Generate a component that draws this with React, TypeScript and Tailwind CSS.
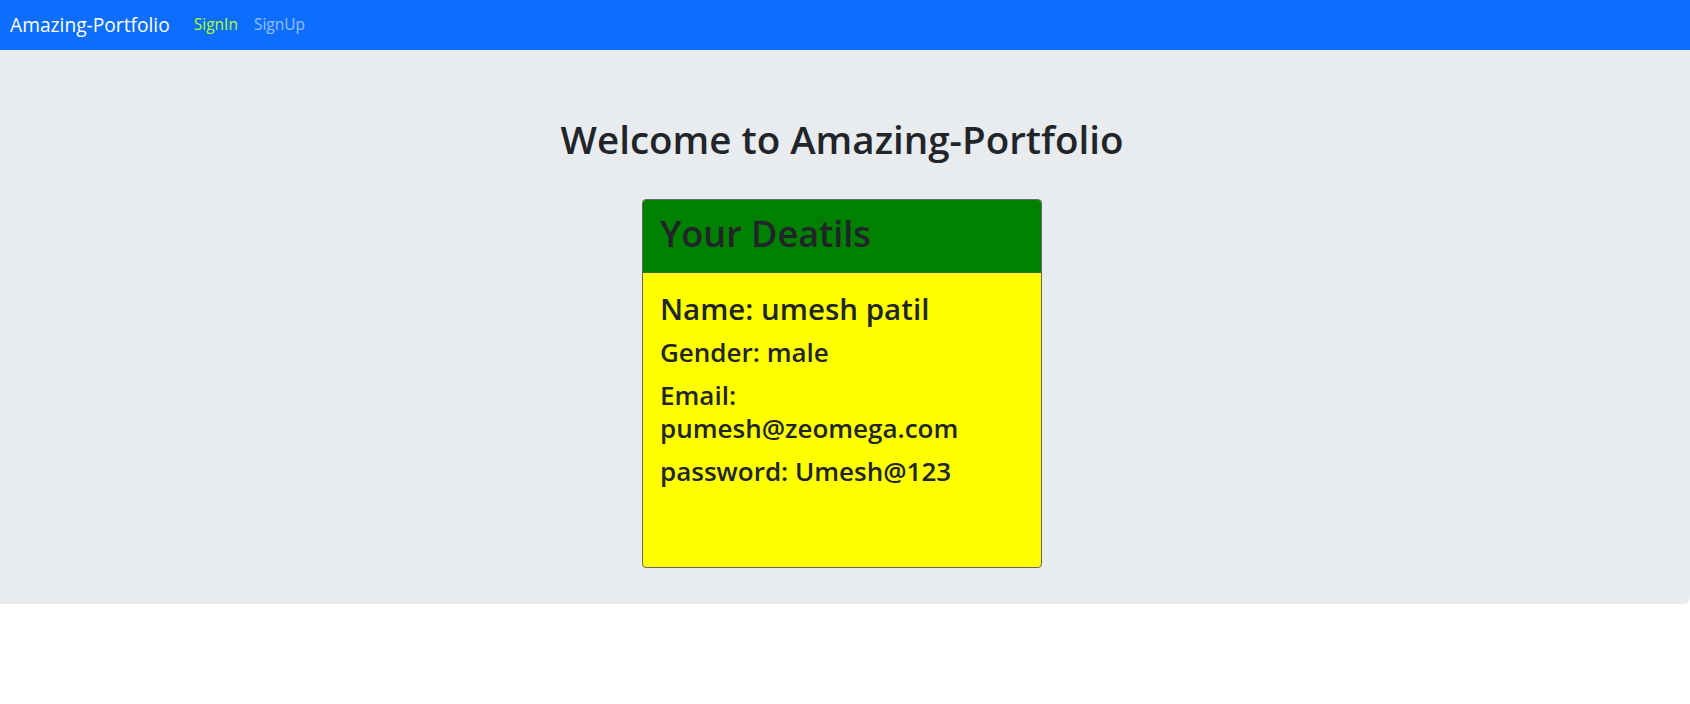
import React from "react";

const user = {
  name: "umesh patil",
  gender: "male",
  email: "pumesh@zeomega.com",
  password: "Umesh@123",
};

const App: React.FC = () => {
  return (
    <div className="min-h-[704px] bg-white text-[#212529] font-['Open_Sans',sans-serif]">
      <nav className="h-[50px] bg-[#0d6efd] flex items-center px-[10px]">
        <span className="text-white text-[19.2px] mr-[24px]">Amazing-Portfolio</span>
        <a className="text-[#adff2f] text-[15.5px] mr-[16px]" href="#">
          SignIn
        </a>
        <a className="text-white/55 text-[15.5px]" href="#">
          SignUp
        </a>
      </nav>

      <div className="bg-[#e9ecef] rounded-br-md h-[554px] flex flex-col items-center pt-[66px] pr-[6px]">
        <h1 className="text-[38.5px] font-semibold leading-[1.2] mb-[37px]">Welcome to Amazing-Portfolio</h1>

        <div className="w-[400px] h-[369px] border border-[#666] rounded-[4px] overflow-hidden flex flex-col bg-[#ffff00]">
          <div className="bg-[#008000] border-b border-[#3a6b3a] px-[17px] pt-[12px] pb-[17px]">
            <h2 className="text-[36px] font-semibold leading-[43px]">Your Deatils</h2>
          </div>
          <div className="px-[17px] pt-[18px] font-semibold">
            <h3 className="text-[29.5px] leading-[1.2] mb-[9px]">Name: {user.name}</h3>
            <h4 className="text-[26px] leading-[33px] mb-[10px]">Gender: {user.gender}</h4>
            <h4 className="text-[26px] leading-[33px] mb-[10px] w-[330px]">Email: {user.email}</h4>
            <h4 className="text-[26px] leading-[33px]">password: {user.password}</h4>
          </div>
        </div>
      </div>
    </div>
  );
};

export default App;
